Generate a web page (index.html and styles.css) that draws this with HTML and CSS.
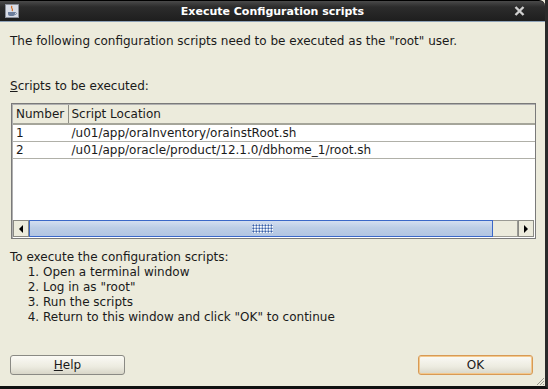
FILE: index.html
```html
<!DOCTYPE html>
<html lang="en">
<head>
  <meta charset="UTF-8">
  <title>Execute Configuration scripts</title>
  <link rel="stylesheet" href="styles.css">
</head>
<body>

  <div class="dialog">
    <div class="titlebar">
      <svg class="app-icon" width="14" height="14" viewBox="0 0 14 14">
        <rect x="0.5" y="0.5" width="13" height="13" fill="#d9dde6" stroke="#8a8f9a"/>
        <path d="M7 2 C5 4 9 5 7 7" stroke="#d2691e" stroke-width="1.2" fill="none"/>
        <path d="M3 8 h7 v2 c0 1 -1 2 -2 2 h-3 c-1 0 -2 -1 -2 -2 z" fill="#6b7d9c"/>
        <path d="M10 8.5 c2 0 2 2 0 2" stroke="#6b7d9c" fill="none"/>
      </svg>
      <span class="title">Execute Configuration scripts</span>
      <svg class="close" width="11" height="10" viewBox="0 0 11 10">
        <path d="M1.5 1 L9.5 9 M9.5 1 L1.5 9" stroke="#d0d0d0" stroke-width="2.4"/>
      </svg>
    </div>

    <div class="content">
      <p class="intro">The following configuration scripts need to be executed as the "root" user.</p>

      <p class="label"><u>S</u>cripts to be executed:</p>

      <div class="table-box">
        <div class="table-view">
          <table class="scripts">
            <thead>
              <tr>
                <th class="col-num">Number</th>
                <th>Script Location</th>
              </tr>
            </thead>
            <tbody>
              <tr>
                <td>1</td>
                <td>/u01/app/oraInventory/orainstRoot.sh</td>
              </tr>
              <tr>
                <td>2</td>
                <td>/u01/app/oracle/product/12.1.0/dbhome_1/root.sh</td>
              </tr>
            </tbody>
          </table>
        </div>
        <div class="hscroll">
          <div class="arrow-btn"><span class="tri-left"></span></div>
          <div class="thumb"><span class="grip"></span></div>
          <div class="track"></div>
          <div class="arrow-btn"><span class="tri-right"></span></div>
        </div>
      </div>

      <div class="steps">
        <p>To execute the configuration scripts:</p>
        <ol>
          <li>Open a terminal window</li>
          <li>Log in as "root"</li>
          <li>Run the scripts</li>
          <li>Return to this window and click "OK" to continue</li>
        </ol>
      </div>

      <div class="buttons">
        <button type="button" class="btn"><u>H</u>elp</button>
        <button type="button" class="btn btn-default">OK</button>
      </div>
    </div>

    <svg class="grip-corner" width="10" height="10" viewBox="0 0 10 10">
      <path d="M9 2 L2 9 M9 5 L5 9 M9 8 L8 9" stroke="#9a9a90" stroke-width="1"/>
    </svg>
  </div>

</body>
</html>
```

FILE: styles.css
```css
* {
  margin: 0;
  padding: 0;
  box-sizing: border-box;
}

body {
  font-family: 'DejaVu Sans', Verdana, sans-serif;
  font-size: 12px;
  color: #1a1a1a;
  background: #ecebdc;
}

.dialog {
  position: relative;
  width: 548px;
  height: 389px;
  background: #ecebdc;
  border-right: 3px solid #2a2a2a;
  border-bottom: 3px solid #111;
  display: flex;
  flex-direction: column;
}

.titlebar {
  height: 22px;
  display: flex;
  align-items: center;
  padding: 0 20px 0 5px;
  background: linear-gradient(#4a4a4a, #2c2c2c 30%, #1e1e1e);
  border-top: 1px solid #000;
  border-bottom: 1px solid #8ea2b8;
  border-top-right-radius: 6px;
}

.title {
  flex: 1;
  text-align: center;
  color: #fff;
  font-weight: bold;
  font-size: 11px;
  padding-left: 12px;
}

.content {
  flex: 1;
  display: flex;
  flex-direction: column;
  padding: 0 9px 0 10px;
}

.intro {
  margin-top: 12px;
  line-height: 15px;
}

.label {
  margin-top: 30px;
  line-height: 15px;
}

.table-box {
  margin-top: 9px;
  margin-left: 1px;
  height: 136px;
  border: 1px solid #7a7a7a;
  box-shadow: inset 1px 1px 0 #b0b0b0;
  background: #fff;
  display: flex;
  flex-direction: column;
}

.table-view {
  flex: 1;
  padding: 1px 0 0 1px;
}

.scripts {
  width: 100%;
  border-collapse: collapse;
}

.scripts th {
  height: 19px;
  text-align: left;
  font-weight: normal;
  padding: 0 3px;
  background: #ecebdc;
  border-bottom: 2px solid #a5a59a;
  border-right: 1px solid #8e8e86;
}

.scripts th.col-num {
  width: 55px;
}

.scripts th:last-child {
  border-right: none;
}

.scripts td {
  height: 17px;
  padding: 0 3px;
  border-bottom: 1px solid #b0b0a8;
  border-right: 1px solid #fff;
}

.hscroll {
  height: 17px;
  margin: 0 1px 1px 1px;
  display: flex;
}

.arrow-btn {
  width: 16px;
  background: #ecebdc;
  border: 1px solid #8a8a84;
  display: flex;
  align-items: center;
  justify-content: center;
}

.tri-left {
  border-top: 4px solid transparent;
  border-bottom: 4px solid transparent;
  border-right: 4px solid #000;
}

.tri-right {
  border-top: 4px solid transparent;
  border-bottom: 4px solid transparent;
  border-left: 4px solid #000;
}

.thumb {
  width: 464px;
  background: linear-gradient(#d4def0, #bccde6 45%, #b2c5e2);
  border: 1px solid #3b68c8;
  display: flex;
  align-items: center;
  justify-content: center;
  padding-left: 2px;
}

.grip {
  width: 21px;
  height: 9px;
  background-image: radial-gradient(circle, #3a5fa8 0.9px, transparent 1.1px),
                    radial-gradient(circle, #ffffff 0.9px, transparent 1.1px);
  background-size: 3px 3px;
  background-position: 0 0, 1px 1px;
}

.track {
  flex: 1;
  background: #ecebdc;
  border: 1px solid #9a9a94;
  border-left: none;
}

.steps {
  margin-top: 11px;
  line-height: 15px;
}

.steps ol {
  padding-left: 33px;
}

.buttons {
  margin-top: auto;
  margin-bottom: 11px;
  display: flex;
  justify-content: space-between;
  padding-right: 3px;
}

.btn {
  width: 115px;
  height: 20px;
  font-family: 'DejaVu Sans', Verdana, sans-serif;
  font-size: 12px;
  color: #1a1a1a;
  border: 1px solid #8a8a84;
  border-radius: 3px;
  background: linear-gradient(#fbfaf5, #ecebe0 60%, #d8d6c8);
}

.btn-default {
  border-color: #d89a55;
  box-shadow: inset 0 0 0 1px #f3c88c;
}

.grip-corner {
  position: absolute;
  right: 0;
  bottom: 0;
}
```
